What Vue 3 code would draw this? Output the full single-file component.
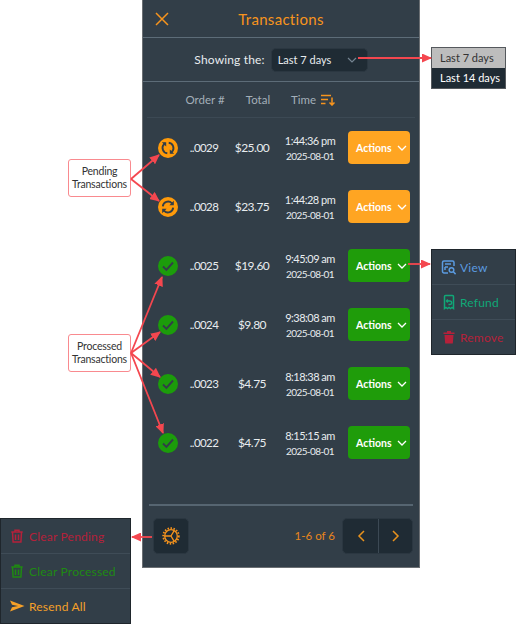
<template>
  <div class="canvas">
    <section class="panel">
      <header class="title-bar">
        <svg class="close" width="14" height="14" viewBox="0 0 14 14"><path d="M1 1l12 12M13 1L1 13" /></svg>
        <h1>Transactions</h1>
      </header>

      <div class="range-bar">
        <span class="range-label">Showing the:</span>
        <div class="range-select">
          <span>Last 7 days</span>
          <svg width="10" height="6" viewBox="0 0 10 6"><path d="M1 1l4 4 4-4" /></svg>
        </div>
      </div>

      <div class="table-head">
        <span class="col-order">Order #</span>
        <span class="col-total">Total</span>
        <span class="col-time">
          Time
          <svg width="14" height="12" viewBox="0 0 14 12"><path d="M0 1.500h10M0 5.500h7M0 9.500h4.500M11 3.500v7.500M8.500 8.500l2.500 2.500 2.500-2.500" /></svg>
        </span>
      </div>

      <ul class="rows">
        <li v-for="(row, index) in rows" :key="row.order" class="row">
          <span class="status" :class="[row.pending ? 'is-pending' : 'is-done', { turned: index === 0 }]">
            <svg v-if="row.pending" width="20" height="20" viewBox="0 0 20 20">
              <path d="M4.800 9.300a5.300 5.300 0 0 1 9-3.200l1 1M15.200 10.700a5.300 5.300 0 0 1-9 3.200l-1-1" />
              <path class="fill" d="M15.800 3.800v4.400h-4.400zM4.200 16.200v-4.400h4.400z" />
            </svg>
            <svg v-else width="20" height="20" viewBox="0 0 20 20"><path d="M5 10.500l3.400 3.400 6.600-7.400" /></svg>
          </span>
          <span class="col-order cell-order">..{{ row.order }}</span>
          <span class="col-total cell-total">{{ row.total }}</span>
          <span class="stamp">
            <span>{{ row.time }}</span>
            <small>2025-08-01</small>
          </span>
          <button class="actions" :class="row.pending ? 'is-pending' : 'is-done'">
            <span>Actions</span>
            <svg width="10" height="6" viewBox="0 0 10 6"><path d="M1 1l4 4 4-4" /></svg>
          </button>
        </li>
      </ul>

      <footer class="foot">
        <button class="gear">
          <svg width="22" height="22" viewBox="0 0 22 22">
            <circle cx="11" cy="11" r="6.300" />
            <circle class="teeth" cx="11" cy="11" r="7.800" />
            <path d="M11 11H4.700M11 11l3.150-5.450M11 11l3.150 5.450" />
          </svg>
        </button>
        <span class="count">1-6 of 6</span>
        <div class="pager">
          <button><svg width="10" height="14" viewBox="0 0 10 14"><path d="M8 2L3 7l5 5" /></svg></button>
          <button><svg width="10" height="14" viewBox="0 0 10 14"><path d="M2 2l5 5-5 5" /></svg></button>
        </div>
      </footer>
    </section>

    <!-- annotations around the panel -->
    <div class="callout callout-pending">Pending<br />Transactions</div>
    <div class="callout callout-processed">Processed<br />Transactions</div>

    <div class="range-menu">
      <div class="range-option">Last 7 days</div>
      <div class="range-option selected">Last 14 days</div>
    </div>

    <div class="menu row-menu">
      <div class="menu-item view">
        <svg width="16" height="16" viewBox="0 0 16 16">
          <path d="M7 14H3A1.500 1.500 0 0 1 1.500 12.500v-9A1.500 1.500 0 0 1 3 2h8.500A1.500 1.500 0 0 1 13 3.500V7" />
          <path d="M4 5h6M4 8h3M4 8v3" /><circle cx="10.500" cy="11" r="2.300" /><path d="M12.300 12.800l2.300 2.300" />
        </svg>
        View
      </div>
      <div class="menu-item refund">
        <svg width="16" height="16" viewBox="0 0 16 16">
          <path d="M3.500 2.500A1 1 0 0 1 4.500 1.500h7a1 1 0 0 1 1 1v12l-1.500-1-1.500 1-1.500-1-1.500 1-1.500-1-1.500 1z" />
          <path d="M6.800 5.500L5.500 7l1.300 1.500M5.500 7H9a1.700 1.700 0 0 1 0 3.500H7.500" />
        </svg>
        Refund
      </div>
      <div class="menu-item remove">
        <svg width="16" height="16" viewBox="0 0 16 16">
          <path class="fill" d="M2.500 3.500h11v1.500h-11zM6 2h4v1.500H6zM3.500 6h9l-.7 8.500H4.200z" />
        </svg>
        Remove
      </div>
    </div>

    <div class="menu bulk-menu">
      <div class="menu-item clear-pending">
        <svg width="16" height="16" viewBox="0 0 16 16">
          <path d="M2.300 4h11.400M6 4V2.300h4V4M3.500 4l.6 10h7.800l.6-10M6.500 6.500v5.500M9.500 6.500v5.500" />
        </svg>
        Clear Pending
      </div>
      <div class="menu-item clear-processed">
        <svg width="16" height="16" viewBox="0 0 16 16">
          <path d="M2.300 4h11.400M6 4V2.300h4V4M3.500 4l.6 10h7.800l.6-10M6.500 6.500v5.500M9.500 6.500v5.500" />
        </svg>
        Clear Processed
      </div>
      <div class="menu-item resend">
        <svg width="16" height="16" viewBox="0 0 16 16">
          <path class="fill" d="M1 2.500l14.500 5.500L1 13.500l2-4.300L9 8 3 6.800z" />
        </svg>
        Resend All
      </div>
    </div>

    <svg class="arrows" width="516" height="624" viewBox="0 0 516 624">
      <defs>
        <marker id="head" markerWidth="10" markerHeight="9" refX="9" refY="4.500" orient="auto" markerUnits="userSpaceOnUse">
          <path class="fill" d="M0 0L10 4.500L0 9z" />
        </marker>
      </defs>
      <line v-for="(a, i) in arrows" :key="i" :x1="a[0]" :y1="a[1]" :x2="a[2]" :y2="a[3]" marker-end="url(#head)" />
    </svg>
  </div>
</template>

<script setup>
const rows = [
  { order: '0029', total: '$25.00', time: '1:44:36 pm', pending: true },
  { order: '0028', total: '$23.75', time: '1:44:28 pm', pending: true },
  { order: '0025', total: '$19.60', time: '9:45:09 am', pending: false },
  { order: '0024', total: '$9.80', time: '9:38:08 am', pending: false },
  { order: '0023', total: '$4.75', time: '8:18:38 am', pending: false },
  { order: '0022', total: '$4.75', time: '8:15:15 am', pending: false },
]

const arrows = [
  [358, 58, 431, 58],
  [408, 264, 430, 264],
  [152, 537, 132, 537],
  [131, 179, 159, 155],
  [131, 179, 159, 201],
  [131, 353, 162, 277],
  [131, 353, 160, 332],
  [131, 353, 160, 377],
  [131, 353, 163, 433],
]
</script>

<style>
body {
  background: #fff;
}
</style>

<style scoped>
.canvas {
  position: relative;
  width: 516px;
  height: 624px;
  overflow: hidden;
  font-family: Lato, "Open Sans", sans-serif;
  background: #fff;
}

svg path,
svg circle {
  fill: none;
  stroke: currentColor;
  stroke-width: 1.500;
}

svg .fill {
  fill: currentColor;
  stroke: none;
}

.panel {
  box-sizing: border-box;
  width: 278px;
  height: 568px;
  margin-left: 142px;
  display: flex;
  flex-direction: column;
  background: #323e48;
  border: 1px solid #6b6f73;
  border-top: 0;
  color: #e8ecef;
}

.title-bar {
  flex: none;
  box-sizing: border-box;
  height: 38px;
  display: flex;
  align-items: center;
  justify-content: center;
  position: relative;
  border-bottom: 1px solid #5d6c78;
}

.close {
  position: absolute;
  left: 12px;
  top: 12px;
  color: #f7941d;
}

h1 {
  margin: 0;
  font-size: 15px;
  font-weight: 400;
  color: #f7941d;
  letter-spacing: 0.3px;
}

.range-bar {
  height: 44px;
  flex: none;
  display: flex;
  align-items: center;
  justify-content: center;
  gap: 6px;
  box-sizing: border-box;
  border-bottom: 1px solid #5d6c78;
}

.range-label {
  font-size: 12px;
  letter-spacing: 0.15px;
}

.range-select {
  box-sizing: border-box;
  width: 97px;
  height: 24px;
  padding: 0 10px 0 6px;
  display: flex;
  align-items: center;
  justify-content: space-between;
  background: #1f2b34;
  border: 1px solid #2b3741;
  border-radius: 5px;
  font-size: 11px;
}

.range-select svg {
  color: #748491;
}

.range-select path {
  stroke-width: 1.200;
}

.table-head {
  box-sizing: border-box;
  height: 36px;
  flex: none;
  margin: 0 4px;
  display: grid;
  grid-template-columns: 38px 40px 66px auto;
  justify-content: start;
  align-items: center;
  justify-items: center;
  font-size: 11.500px;
  color: #a3afb9;
  border-bottom: 1px solid #3c4954;
}

.table-head .col-order {
  grid-column: 2;
  white-space: nowrap;
}

.table-head .col-total {
  grid-column: 3;
}

.table-head .col-time {
  grid-column: 4;
  display: flex;
  align-items: center;
  gap: 5px;
}

.col-time svg {
  color: #f7941d;
}

.rows {
  list-style: none;
  margin: 0;
  padding: 0;
}

.row {
  height: 59px;
  margin: 0 4px;
  display: grid;
  grid-template-columns: 42px 30px 66px 50px 1fr;
  align-items: center;
  justify-items: center;
}

.cell-order {
  font-size: 11.500px;
  letter-spacing: -0.6px;
}

.cell-total {
  font-size: 12px;
  letter-spacing: -0.5px;
}

.status {
  width: 20px;
  height: 20px;
  border-radius: 50%;
  display: block;
}

.status svg {
  display: block;
  color: #323e48;
}

.status path {
  stroke-width: 1.900;
}

.status .fill {
  stroke: none;
}

.status.turned svg {
  transform: rotate(90deg);
}

.status.is-pending {
  background: #ff9a0a;
}

.status.is-done {
  background: #1c9c0b;
}

.stamp {
  display: flex;
  flex-direction: column;
  align-items: center;
  gap: 3px;
  white-space: nowrap;
  font-size: 11px;
  letter-spacing: -0.5px;
}

.stamp small {
  font-size: 10px;
  letter-spacing: -0.6px;
}

.actions {
  box-sizing: border-box;
  width: 62px;
  height: 33px;
  justify-self: start;
  margin-left: 13px;
  padding: 0 3px 0 8px;
  display: flex;
  align-items: center;
  justify-content: space-between;
  border: 0;
  border-radius: 4px;
  color: #fff;
  font: 700 10.500px Lato, "Open Sans", sans-serif;
}

.actions.is-pending {
  background: #ffa522;
}

.actions.is-done {
  background: #1f9c0a;
}

.actions path {
  stroke-width: 1.300;
}

.foot {
  margin: auto 6px 12px 6px;
  height: 51px;
  box-sizing: border-box;
  padding: 11px 0 1px 4px;
  display: flex;
  align-items: center;
  border-top: 2px solid #566571;
}

.gear {
  width: 36px;
  height: 36px;
  padding: 0;
  display: grid;
  place-content: center;
  background: #1f2b34;
  border: 1px solid #2b3741;
  border-radius: 5px;
  color: #f7941d;
}

.gear svg {
  display: block;
}

.gear path,
.gear circle {
  stroke-width: 1.300;
}

.gear circle.teeth {
  stroke-width: 1.800;
  stroke-dasharray: 1.500 1.500;
}

.count {
  margin-left: auto;
  margin-right: 7px;
  font-size: 11.500px;
  color: #e8861d;
}

.pager {
  display: flex;
  background: #1f2b34;
  border: 1px solid #2b3741;
  border-radius: 5px;
}

.pager button {
  width: 35px;
  height: 34px;
  padding: 0;
  display: grid;
  place-content: center;
  background: none;
  border: 0;
  color: #e8921d;
}

.pager button + button {
  width: 34px;
  border-left: 1px solid #3c4954;
}

.pager svg {
  display: block;
}

.callout {
  position: absolute;
  left: 68px;
  box-sizing: border-box;
  width: 63px;
  height: 38px;
  padding-top: 5px;
  background: #fff;
  border: 1px solid #f98a8f;
  border-radius: 3px;
  text-align: center;
  font-size: 10.500px;
  letter-spacing: -0.2px;
  line-height: 12.500px;
  color: #333;
}

.callout-pending {
  top: 159px;
}

.callout-processed {
  top: 334px;
}

.range-menu {
  position: absolute;
  left: 431px;
  top: 47px;
  box-sizing: border-box;
  width: 75px;
  border: 1px solid #55595d;
  font-size: 11px;
}

.range-option {
  height: 20px;
  padding-left: 8px;
  line-height: 20px;
  background: #bdbdbd;
  color: #333;
}

.range-option.selected {
  background: #1f2b34;
  color: #fff;
}

.menu {
  position: absolute;
  box-sizing: border-box;
  background: #323e48;
  border: 1px solid #1f262c;
  font-size: 12px;
}

.menu-item {
  height: 34px;
  padding-left: 9px;
  display: flex;
  align-items: center;
  gap: 3px;
  letter-spacing: 0.2px;
}

.menu-item + .menu-item {
  border-top: 1px solid #3f4c57;
}

.row-menu {
  left: 431px;
  top: 249px;
  width: 85px;
  height: 106px;
}

.bulk-menu {
  left: 0;
  top: 518px;
  width: 131px;
  height: 106px;
}

.bulk-menu .menu-item {
  padding-left: 8px;
  gap: 4px;
}

.view {
  color: #5b9be0;
}

.refund {
  color: #10a877;
}

.remove,
.clear-pending {
  color: #b5213a;
}

.clear-processed {
  color: #1f8a12;
}

.resend {
  color: #f5a028;
}

.arrows {
  position: absolute;
  left: 0;
  top: 0;
  pointer-events: none;
  color: #f4474f;
}

.arrows line {
  stroke: #f4474f;
  stroke-width: 1.800;
}
</style>
